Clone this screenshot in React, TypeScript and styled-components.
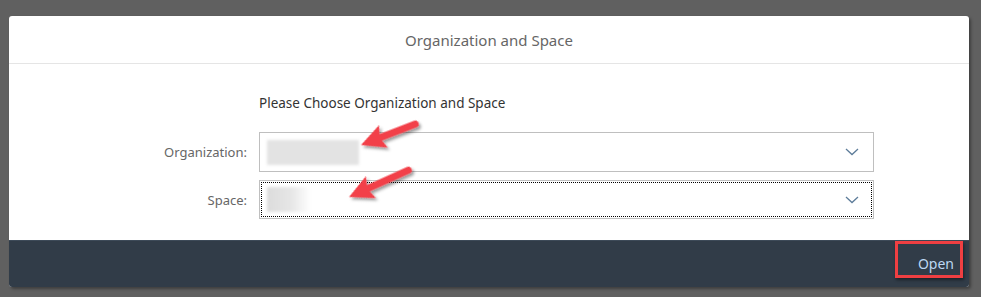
import styled, { createGlobalStyle } from "styled-components";

const GlobalStyle = createGlobalStyle`
  html, body {
    margin: 0;
    padding: 0;
    background: #606060;
    font-family: "Noto Sans", "Liberation Sans", Arial, sans-serif;
  }
  #root {
    position: relative;
    width: 981px;
    height: 297px;
    overflow: hidden;
  }
`;

const Page = styled.div`
  padding: 16px 0 0 9px;
`;

const Dialog = styled.div`
  width: 960px;
  background: #fff;
  border-radius: 3px;
  overflow: hidden;
  box-shadow: 2px 2px 3px rgba(0, 0, 0, 0.35);
  display: flex;
  flex-direction: column;
`;

const Header = styled.div`
  height: 47px;
  border-bottom: 1px solid #e5e5e5;
  display: flex;
  align-items: center;
  justify-content: center;
  font-size: 15px;
  color: #666;
`;

const Body = styled.div`
  height: 176px;
  box-sizing: border-box;
  padding: 29px 0 0 0;
  display: grid;
  grid-template-columns: 238px 615px;
  column-gap: 12px;
  row-gap: 8px;
  align-content: start;
  align-items: center;
`;

const Intro = styled.div`
  grid-column: 2;
  font-size: 13.5px;
  color: #333;
  height: 20px;
  line-height: 20px;
  margin-bottom: 11px;
`;

const Label = styled.label`
  grid-column: 1;
  text-align: right;
  font-size: 13px;
  color: #666;
`;

const Select = styled.div<{ $focused?: boolean }>`
  grid-column: 2;
  height: ${(p) => (p.$focused ? 39 : 40)}px;
  box-sizing: border-box;
  border: 1px solid #bfbfbf;
  background: #fff;
  display: flex;
  align-items: center;
  justify-content: space-between;
  padding: 0 14px 0 7px;
  outline: ${(p) => (p.$focused ? "1px dotted #000" : "none")};
  outline-offset: -3px;
`;

const Blurred = styled.div<{ $w: number; $fade?: boolean }>`
  width: ${(p) => p.$w}px;
  height: 25px;
  background: ${(p) =>
    p.$fade
      ? "linear-gradient(90deg, #dcdcdc 0%, #e6e6e6 55%, rgba(255,255,255,0) 100%)"
      : "#e3e3e3"};
  filter: blur(1.5px);
`;

const Footer = styled.div`
  height: 47px;
  background: #313c48;
  border-top: 1px solid #3d4a58;
  box-sizing: border-box;
  display: flex;
  justify-content: flex-end;
  align-items: flex-start;
  padding-right: 6px;
`;

const OpenButton = styled.button`
  width: 68px;
  height: 37px;
  box-sizing: border-box;
  border: 3px solid #ef3f42;
  background: transparent;
  color: #bcd7f2;
  font-family: "Noto Sans", "Liberation Sans", Arial, sans-serif;
  font-size: 14px;
  padding: 7px 6px 0 0;
  text-align: right;
  box-shadow: 1px 2px 3px rgba(0, 0, 0, 0.45);
`;

const Overlay = styled.svg`
  position: absolute;
  left: 0;
  top: 0;
  pointer-events: none;
`;

function Chevron() {
  return (
    <svg width="14" height="8" viewBox="0 0 14 8">
      <polyline points="1,1 7,6.5 13,1" fill="none" stroke="#5e7d9a" strokeWidth="1.3" />
    </svg>
  );
}

function Arrow({ tip, tail }: { tip: [number, number]; tail: [number, number] }) {
  const dx = tail[0] - tip[0];
  const dy = tail[1] - tip[1];
  const len = Math.sqrt(dx * dx + dy * dy);
  const ang = (Math.atan2(dy, dx) * 180) / Math.PI;
  return (
    <g transform={`translate(${tip[0]} ${tip[1]}) rotate(${ang})`} filter="url(#sh)">
      <line x1="16" y1="0" x2={len - 3} y2="0" stroke="#f2414a" strokeWidth="7" strokeLinecap="round" />
      <polygon points="0,0 24,-12 20,0 24,12" fill="#f2414a" />
    </g>
  );
}

export default function App() {
  return (
    <>
      <GlobalStyle />
      <Page>
        <Dialog>
          <Header>Organization and Space</Header>
          <Body>
            <Intro>Please Choose Organization and Space</Intro>
            <Label>Organization:</Label>
            <Select>
              <Blurred $w={92} />
              <Chevron />
            </Select>
            <Label>Space:</Label>
            <Select $focused>
              <Blurred $w={44} $fade />
              <Chevron />
            </Select>
          </Body>
          <Footer>
            <OpenButton>Open</OpenButton>
          </Footer>
        </Dialog>
      </Page>
      <Overlay width="981" height="297">
        <defs>
          <filter id="sh" x="-20%" y="-40%" width="150%" height="200%">
            <feDropShadow dx="1" dy="3" stdDeviation="1.5" floodColor="#000" floodOpacity="0.4" />
          </filter>
        </defs>
        <Arrow tip={[361, 145]} tail={[418, 123]} />
        <Arrow tip={[349, 197]} tail={[411, 169]} />
      </Overlay>
    </>
  );
}
